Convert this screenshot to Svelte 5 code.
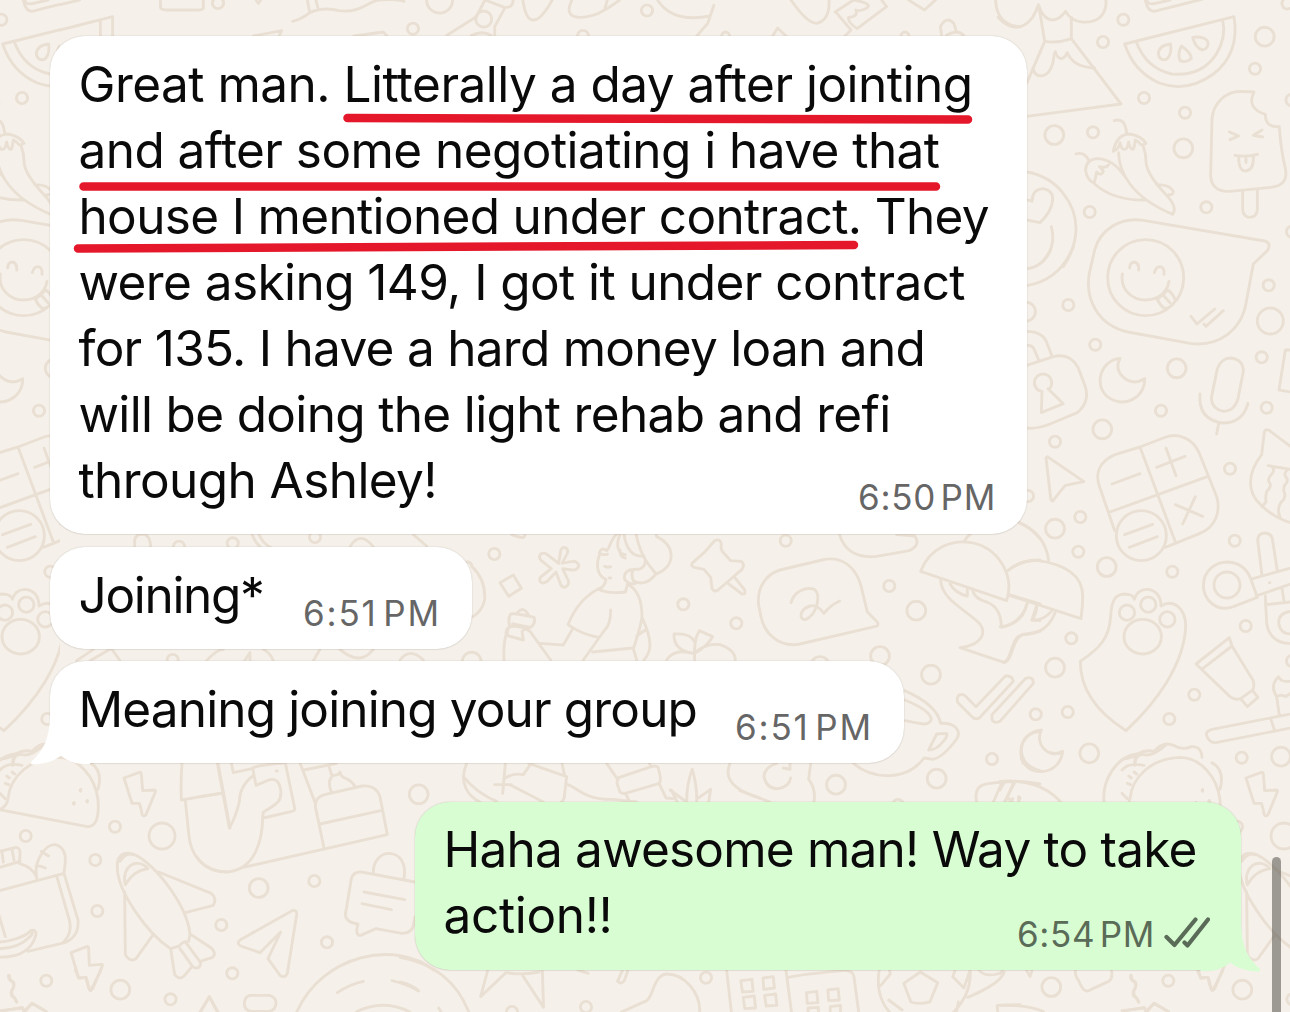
<script lang="ts">
	type Message = {
		id: string;
		lines: { text: string; width: number }[];
		time: string;
		mine?: boolean;
		tail?: boolean;
	};

	const messages: Message[] = [
		{
			id: 'contract',
			time: '6:50 PM',
			lines: [
				{ text: 'Great man. Litterally a day after jointing', width: 894 },
				{ text: 'and after some negotiating i have that', width: 861 },
				{ text: 'house I mentioned under contract. They', width: 910.5 },
				{ text: 'were asking 149, I got it under contract', width: 886.5 },
				{ text: 'for 135. I have a hard money loan and', width: 846.5 },
				{ text: 'will be doing the light rehab and refi', width: 812 },
				{ text: 'through Ashley!', width: 358.5 }
			]
		},
		{ id: 'joining', time: '6:51 PM', lines: [{ text: 'Joining*', width: 185 }] },
		{
			id: 'meaning',
			time: '6:51 PM',
			tail: true,
			lines: [{ text: 'Meaning joining your group', width: 618.5 }]
		},
		{
			id: 'reply',
			time: '6:54 PM',
			mine: true,
			tail: true,
			lines: [
				{ text: 'Haha awesome man! Way to take', width: 753 },
				{ text: 'action!!', width: 169 }
			]
		}
	];

	// spread the letters so that a line takes the width it was set to
	function fit(node: HTMLElement, width: number) {
		const natural = node.getBoundingClientRect().width;
		node.style.letterSpacing = (width - natural) / node.textContent!.length + 'px';
	}

	// wallpaper bubbles: x, y, radius
	const S = 5.6;
	const M = 9.4;
	const L = 13;
	const dots = [
		[1123.3, 19.7, S], [1103, 42, S], [1264.7, 36.7, M], [1255, 68.7, S], [1144, 98, S],
		[1185, 112.7, S], [1054.3, 135, M], [1093, 132.3, S], [1183.3, 148.3, M], [1089.7, 212, S],
		[1206.3, 207.3, S], [1291.5, 100, S], [1292, 231.7, S], [1287.5, 3.5, S], [1068.3, 305, S],
		[1026, 311.7, M], [1095.3, 344.7, S], [1176.7, 368.3, M], [1268.7, 285.3, S], [1270.3, 321, L],
		[1261.7, 357.3, S], [1161, 410.7, S], [1102.3, 429.3, M], [1055, 441.7, S], [1266.7, 407.7, S],
		[1230, 468.7, S], [1028, 496, S], [1080.3, 517, S], [1055, 528.7, M], [1078.3, 551.7, S],
		[1106.7, 567, M], [1172.3, 571.7, S], [1234.7, 540.7, S], [1071.3, 638.3, S], [1055, 667.7, M],
		[1245.7, 626, S], [1194.3, 694.7, S], [1169.3, 719, S], [1035.7, 714.3, S], [1067.7, 712, S],
		[1089.3, 753.3, M], [1241.7, 757.7, S], [1281, 756.7, M], [1292, 661, S], [1237, 826.7, S],
		[1284, 836, L], [1051.3, 987, M], [1168.3, 980.7, S], [1242.3, 989.7, M], [1292.5, 999.3, S],
		[25.7, 836, S], [95.3, 860, S], [97.3, 911, S], [258.7, 888, M], [314.3, 881, S],
		[221.3, 925, S], [232.3, 973.3, S], [327, 942.3, S], [418.7, 794.3, M], [494.3, 554, S],
		[683.3, 604.3, S], [736.3, 623.3, S], [471.7, 661.7, M], [785.7, 540.7, S], [889.3, 586, S],
		[916.3, 610.7, M], [880, 656, M], [931, 674.7, M], [820, 666, M], [992, 759, S],
		[836, 784.7, M], [936.7, 778.7, M], [898, 805, S], [179, 546.7, S], [232.7, 543.3, S],
		[315, 537, S], [172.7, 660, S], [218, 3, S], [413, 28.7, S], [483.7, 19, 8], [647, 10.5, S],
		[439.6, 0, L], [905, 36, 4], [725.6, 36, 4], [583, 36, S], [706, 977.7, S], [586, 1007, S],
		[512, 1012, S]
	];

	// wallpaper doodles, each block on its own 3x grid
	const doodles = [
		{
			at: 'translate(1000 0) scale(.33333)',
			paths: [
				// volcano
				'M-6 52Q50 112 98 52Q110 32 115 14Q122 36 134 49Q164 76 197 34Q212 62 246 66Q310 70 318 14V-9',
				'M117 20L134 124Q176 130 214 116V52M134 124L80 250M214 116L363 312L80 349',
				'M99 205C106 236 138 234 152 206C168 176 156 166 166 155C174 180 190 184 202 158C214 188 246 202 284 204',
				// book
				'M436 0Q442 34 462 34L606 -2M440 0Q444 16 466 10L510 0',
				// melon
				'M374 132L702 50Q720 160 640 222Q560 280 478 249Q402 216 374 132ZM408 124Q438 206 516 222Q604 230 648 164Q680 112 668 60',
				'M512 132Q476 136 475 162Q478 182 498 179Q516 168 512 132ZM544 138Q532 162 540 182Q558 190 574 176Q574 158 544 138ZM578 112Q586 144 608 150Q630 142 622 122Q608 108 578 112Z',
				// ice lolly
				'M762 276Q738 324 796 343Q796 384 838 380Q842 448 857 510C862 546 842 558 812 562L690 574C650 576 632 556 632 524L636 356C640 310 676 274 722 274Z',
				'M728 572V628Q730 652 750 652Q772 650 772 626V568M688 396L716 408L690 419M786 390L760 406L788 411M705 466Q740 472 772 463M716 470Q716 514 738 513Q762 510 760 470M738 476V488',
				// chillies
				'M343 362Q376 350 380 402M340 454Q350 402 390 402Q424 408 438 430Q422 440 418 428L406 420Q404 438 400 448Q390 450 386 426Q382 448 374 448Q364 450 360 428Q358 446 340 454Z',
				'M356 458Q356 506 390 552Q430 606 518 643Q534 620 496 582Q438 520 438 484Q438 460 430 440M228 462Q252 454 266 480M376 532Q340 476 290 476Q256 480 257 512Q260 538 282 550Q286 538 290 516Q304 530 310 514Q304 504 298 500Q318 506 326 494M284 552Q340 602 436 600M470 554Q510 554 520 574Q520 586 506 584',
				// heart eyes
				'M80 516C170 530 230 610 228 692C226 730 214 764 190 800M80 600Q90 600 96 604Q98 566 130 566Q160 572 158 598Q156 634 120 668L80 660M154 680Q170 740 128 785'
			]
		},
		{
			at: 'translate(1000 250) scale(.33333)',
			paths: [
				// speech bubble with face
				'M284 0L268 70C254 150 296 226 384 246L570 280C656 292 724 240 738 160L760 42L802 2Q816 -20 794 -27L430 -89C360 -100 300 -60 284 0',
				'M551 83A114 114 0 1 1 323 83A114 114 0 1 1 551 83ZM389 54Q390 36 404 36Q418 40 416 60M463 68Q468 50 480 50Q494 52 492 73M367 72C360 120 398 150 436 150C476 150 502 126 507 94M472 148L504 120Q520 132 526 152Q520 170 494 176Q480 166 472 148M490 136L510 158',
				// heart eyes, low side
				'M573 199L591 222L644 177M612 222L618 229L670 182M80 56Q124 54 152 0M80 107Q180 90 220 -10',
				// padlock
				'M80 244Q130 244 142 282L155 316M80 286Q98 284 104 302L116 330M80 346L160 320Q210 308 234 352L256 410Q270 456 232 488L150 522Q110 538 80 534',
				'M146 418A26 26 0 1 0 126 424L124 488L190 461L144 416',
				// moon
				'M360 325C304 330 280 400 320 438C366 478 436 446 434 386Q398 408 368 380Q344 356 360 325Z',
				// microphone
				'M652 356Q664 324 692 324Q730 328 730 364L714 446Q704 482 672 484Q636 478 634 444ZM600 432Q594 508 666 519Q728 520 744 460M656 520L650 552',
				'M872 300L856 300L837 420L872 426',
				// keypad
				'M420 591L345 614C300 634 282 668 300 714L344 842M420 591L490 564C536 544 580 568 598 610L650 740C662 780 650 830 600 850L496 892M420 591L526 876M330 786L622 680M336 702L420 671M498 594L528 677M470 652L555 619M526 764L608 799M586 740L548 822M374 854L458 823M388 892L472 860',
				'M499 857A75 75 0 1 1 349 857A75 75 0 1 1 499 857Z',
				// cursor
				'M142 620L252 695L196 706Q184 720 158 753Q152 750 152 744L138 624Z',
				// monster
				'M872 590L806 540Q796 536 793 546L785 614C738 674 744 730 782 764C808 792 850 812 872 818M804 647L872 658M818 652Q826 664 812 676Q800 690 810 700Q814 712 800 724Q796 740 798 756L786 770M862 660Q848 672 860 684Q866 694 854 706Q848 720 854 730Q858 744 842 758Q830 780 840 800'
			]
		},
		{
			at: 'translate(1000 500) scale(.33333)',
			paths: [
				// paw
				'M241 484C300 444 328 414 332 350C334 308 342 284 372 282Q400 282 403 298Q412 268 442 268Q482 272 483 318C520 296 558 324 557 380C552 494 470 606 378 692C296 640 240 570 241 484Z',
				'M404 338A23 23 0 1 1 358 338A23 23 0 1 1 404 338ZM468 314A23 23 0 1 1 422 314A23 23 0 1 1 468 314ZM525 358A23 23 0 1 1 479 358A23 23 0 1 1 525 358ZM484 410A56 52 0 1 1 372 410A56 52 0 1 1 484 410Z',
				// scissors
				'M772 292L700 320C650 338 610 300 610 256C612 208 648 186 684 186C716 188 740 204 752 236L772 292M720 255A39 39 0 1 1 642 255A39 39 0 1 1 720 255ZM758 236L872 204M768 288L872 252M786 226L773 120Q774 100 794 99Q814 100 817 116L832 212M796 288L800 370C804 404 830 432 872 430M796 314L872 306M846 264L852 304M872 334Q836 338 836 368Q840 402 872 402M808 248L810 248',
				// tube
				'M588 492L688 413L696 438L760 542Q764 560 758 570L722 596Q706 602 690 590ZM608 506L696 438M722 596L742 620L774 592L758 572',
				// toothbrush
				'M872 642L636 688Q616 694 620 706Q628 732 652 727L872 684M812 656L824 692M838 646L830 590Q808 556 836 530Q842 548 872 544M830 590Q846 582 856 590L872 580',
				// parasols
				'M22 213Q60 180 110 181Q250 200 248 290Q248 320 243 356L28 286M58 68Q136 102 146 182M80 314Q66 374 0 380M110 320Q110 340 96 360Q130 362 154 334M166 336Q150 380 116 394C86 410 64 396 50 414C34 430 30 490 10 486',
				// moon
				'M124 690C70 698 50 744 70 790M124 690C104 728 140 776 186 757',
				// lettuce
				'M366 778Q400 774 412 762Q438 748 462 754Q490 722 520 736Q546 752 574 740Q604 738 606 772'
			]
		},
		{
			at: 'translate(1000 750) scale(.33333)',
			paths: [
				// moon, low side
				'M64 20C74 80 178 84 188 4Q170 14 152 8',
				'M312 154C306 90 350 20 410 12Q404 24 404 42',
				'M0 94Q120 84 186 160M0 120L12 98M14 154L46 94M28 156L38 146M56 156L60 142',
				'M226 660Q224 676 236 692Q250 728 266 722L326 694Q340 684 334 660M392 676Q390 690 404 696Q412 708 400 724Q396 738 410 744L416 756M0 766Q80 764 130 784M368 784L432 772L438 784L462 760L504 784M0 670L6 664M80 662L90 680L96 662M592 660L602 684L624 682Q628 708 638 722L668 662'
			]
		},
		{
			at: 'translate(460 520) scale(.33333)',
			paths: [
				'M20 126Q34 124 36 140Q78 180 74 240Q66 274 38 290M155 44Q180 54 192 52L196 42M120 188L160 165L184 205L146 229Z',
				// flower
				'M296 130L302 92Q308 78 318 84Q326 90 322 100L306 130Q330 124 344 124Q358 130 356 140Q350 152 336 150L308 146L326 184Q326 198 314 202Q302 200 300 188L288 156L262 184Q246 194 240 184Q236 174 246 168L274 146L244 122Q234 110 242 102Q252 96 262 104Z',
				// girl
				'M472 40C450 60 452 80 440 92Q424 80 418 98Q426 106 442 103M418 106C406 140 414 168 438 178Q436 198 416 208Q440 222 496 216L502 196M434 139Q442 144 452 140M448 174L452 174M480 44C464 80 478 102 496 104M492 42C498 90 520 112 552 108C562 130 550 146 534 148Q488 146 494 178Q508 196 526 190M480 90Q480 112 496 114M528 42Q540 100 566 134L588 162C560 198 530 190 520 182Q512 164 520 148M588 42L590 50C650 80 646 140 588 162',
				'M416 206C370 230 342 268 324 314Q366 344 416 352M452 270Q452 314 434 330L370 420M502 192Q546 214 546 290C540 330 530 356 520 386L530 420M398 396L518 384M546 292C580 366 574 394 552 420M530 348L556 330M338 326L310 375L240 370M132 420Q130 370 138 346Q138 324 150 320M150 320Q142 298 152 282Q166 278 222 292Q228 310 212 322L158 312M172 278Q190 256 206 286M140 346L190 360L186 334Q196 322 210 334L272 420M142 344Q140 318 160 318L206 324',
				// pin
				'M696 130L732 98L764 62Q782 54 784 74Q780 88 792 100L812 122L844 124Q856 134 846 148L774 210Q762 218 756 206L752 172L732 148L702 142Q692 138 696 130ZM804 190L846 222Q858 224 854 210L824 172',
				// fruit
				'M700 400Q640 392 642 342Q692 338 704 366M704 420Q700 360 718 332L758 350Q740 380 704 400M620 420Q642 384 700 400Q740 368 780 374Q826 390 826 420',
				// picnic
				'M20 730C-6 790 26 830 60 846M10 770Q50 820 110 844M136 730L128 820M104 794H154M132 776Q160 758 190 764L208 738M206 730L320 770L314 820Q314 840 304 846M150 794L250 846M306 730L314 768M322 794C350 800 370 840 460 838L530 846M440 730L474 780M474 780Q466 782 480 816Q488 822 496 820L598 790Q606 780 594 742Q588 736 574 740L474 774M496 820L510 846M598 792L618 834L640 836M568 730L574 740M630 810L680 846M680 846Q680 790 697 748Q712 800 710 846M634 810L652 846M752 808L712 836M752 808L746 846M810 730C784 790 850 820 900 834'
			]
		},
		{
			at: 'translate(740 520) scale(.33333)',
			paths: [
				// note bubble
				'M120 150L246 120C304 106 346 140 362 194L382 276L412 306Q418 318 404 320L180 372C116 384 72 340 62 286L56 256C50 204 76 164 120 150Z',
				'M153 248C162 214 196 200 224 208C244 226 230 286 196 299C176 300 178 268 210 258Q230 252 252 280Q270 256 299 243',
				'M298 42C312 90 350 116 410 109L508 92Q544 74 524 48L470 44',
				// parasols
				'M542 154C570 80 640 58 694 68C770 82 826 160 800 242ZM674 62Q680 50 692 42M836 8Q870 20 900 56M806 150Q840 122 900 120M808 224L900 252',
				'M602 180C604 240 680 270 720 312C740 340 724 376 660 383L794 428C820 420 816 340 860 342L900 334M630 192Q646 220 682 228V206M698 212Q704 236 740 246Q784 262 784 322C820 316 850 290 862 250M890 256L876 300L900 302',
				// ticks
				'M656 526Q668 520 676 528L708 560L796 468Q818 466 820 484L720 592Q708 602 696 590L654 548Q648 536 656 526ZM756 584L856 476Q880 466 880 490L782 602Q762 614 756 598Z',
				// mug
				'M494 512Q590 554 602 610C650 608 666 636 648 660Q608 712 580 718L552 714C500 784 400 780 340 730M494 540Q570 570 574 598Q568 614 550 612Q520 608 496 602M590 642L620 640Q624 650 608 666Q590 690 566 690Z',
				// refresh tag
				'M110 730Q74 740 72 770Q80 808 114 806Q148 800 152 774M130 744L150 748V732M212 730L206 778Q228 806 222 846M0 812L90 846',
				'M900 634Q844 640 844 694Q850 740 900 752',
				'M710 846Q698 794 750 790Q830 778 900 792M760 846L784 792M796 846L820 790M808 836L818 846M836 830V846'
			]
		},
		{
			at: 'translate(0 740) scale(.33333)',
			paths: [
				// taco
				'M-100 190L262 260Q300 262 294 180C286 110 236 54 176 52C90 54 30 110 24 176Q20 200 0 208',
				'M38 76Q40 40 66 44Q94 50 132 14M270 68Q310 90 294 148M0 90Q20 66 66 76M0 160L16 176M20 108L28 114M16 130L26 134M36 96L44 102',
				'M242 151H240M222 190H220M262 184H260',
				'M242 148V154M222 187V193M262 181V187',
				// bolts
				'M372 114L418 97Q424 96 424 102L428 152L462 150Q468 150 466 156L438 224Q430 232 426 222Q424 206 418 190L396 190Z',
				'M213 638L260 620Q266 618 266 626L268 676L302 673Q310 672 306 680L278 746Q270 756 266 744Q264 726 258 712L236 714Z',
				// shopping bag
				'M-10 454L192 400L234 540Q238 590 194 608L84 634M170 408L208 540Q218 580 190 606M110 414C100 364 136 312 166 314C206 324 196 370 192 398M146 348Q132 340 124 334M136 384Q120 376 108 378M110 412Q98 382 58 370L60 346Q62 322 48 322L0 334M60 364L0 382M36 328L42 360M6 336L10 366M-20 470L16 590',
				'M-60 600C0 620 80 590 92 572Q108 566 108 584C94 640 40 660 -40 648M92 572Q102 580 90 590Q50 630 -20 626',
				// plane
				'M512 626C440 580 350 450 352 380Q350 338 390 340C450 350 560 490 570 582L566 604Q546 604 538 618ZM376 434C362 382 410 348 444 386Q400 392 376 434ZM360 364Q378 336 398 344M476 396L634 460Q652 476 640 496L556 518M374 456L376 644Q390 668 408 656L458 586M512 626L524 704Q538 722 552 708L574 682M570 582L634 624Q650 640 638 652L600 664M540 626L578 680Q600 692 602 668L558 608',
				// steam and box
				'M28 706Q26 718 40 726Q46 738 36 750Q32 764 44 774L50 786M0 812L68 804L72 816M74 816L96 790L140 816M602 816L628 770L654 816',
				// trousers
				'M546 69Q542 120 544 180L660 160M556 182L566 280C572 350 610 392 680 396M654 69L690 264'
			]
		},
		{
			at: 'translate(200 740) scale(.33333)',
			paths: [
				'M52 69L88 264Q106 234 118 186C118 140 150 112 162 106M0 170L66 160M-10 350Q20 396 80 396C170 390 188 290 188 230L190 216C236 190 246 180 242 150Q236 110 206 120L168 136L158 84Q170 76 250 69M256 69L284 204Q286 212 276 214L190 234M94 69L100 98L156 86M232 93H229',
				// cake
				'M372 324L346 200Q346 170 374 164L486 138Q528 134 540 170L562 284L130 382M360 252L542 212M346 190L300 69M312 90L410 70M394 156Q380 120 400 106Q416 106 420 96Q422 112 440 116Q458 126 464 138M386 76L396 108',
				// paper plane
				'M276 512Q292 508 290 524L262 700Q254 716 240 706L204 656L242 576L180 638L122 618Q108 610 120 600Z',
				// chat lock
				'M645 426L484 396Q460 394 454 416L436 524Q438 548 474 552Q464 588 482 586L528 566L606 580Q640 580 642 546L645 530M520 396C520 360 544 340 568 340C600 342 620 370 612 414M492 456L614 479M486 491L574 509',
				'M133 790Q134 766 154 766H208Q228 770 228 790Q226 812 206 814H154Q134 812 133 790ZM0 816L28 770L52 816',
				// lid
				'M290 816C370 640 590 600 700 690M412 758Q450 732 490 724M576 722Q620 732 656 753M468 816Q550 776 630 816'
			]
		},
		{
			at: 'translate(400 920) scale(.39541 .33333)',
			paths: [
				'M0 112C80 128 142 180 174 276M0 186Q30 194 46 212M98 264L104 276M222 150L204 230L268 158Q310 166 352 156M310 166L363 262L360 150M450 150L476 160M562 152L550 184Q560 196 568 180L576 152M560 276L624 242C642 226 640 170 672 162C720 160 760 220 758 276M826 150L838 276M976 150L990 276M980 174Q990 166 1120 152Q1146 150 1148 170L1160 276',
				'M862 182L890 178L893 214L866 216ZM918 174L944 170L947 204L920 208ZM868 232L896 228L899 264L872 266ZM922 226L950 222L953 256L926 258ZM1028 218L1054 214L1057 248L1030 250ZM1082 210L1108 206L1111 240L1084 242ZM1032 276V264L1058 262V276M1088 276V260L1114 256V276',
				'M1212 150C1206 190 1210 240 1238 276M1238 150L1240 162L1216 196M1316 156L1360 188L1340 246Q1312 254 1292 246L1274 190ZM1404 150L1398 170L1426 204L1442 150Q1446 220 1400 276M1236 240L1270 270M1412 246L1408 274M1464 150Q1480 176 1528 156Q1520 190 1436 232M1568 254L1510 256L1512 276'
			]
		},
		{
			at: 'translate(60 0) scale(.61224 .33333)',
			paths: [
				'M0 14L32 0M164 0V20Q164 30 176 30H224Q236 30 234 20V0M0 90L86 50V108M66 60V108M320 0L324 10L328 0M404 0L408 38M418 0L422 30M380 64Q396 56 408 38Q430 20 456 32C490 40 500 8 520 0Q550 -4 562 4M316 108L362 92L358 108M480 108L528 96L534 108M632 106L680 50L694 0M694 0L726 22Q740 24 740 0M726 26L710 80V108M756 0C762 80 780 80 804 0M836 0C820 60 850 60 880 40Q900 20 914 0M890 26L894 0M976 0Q1000 70 1062 48M1068 16L1058 70L1040 108M1194 0Q1220 70 1236 70Q1258 60 1256 0M1266 36L1296 0M1296 0Q1328 10 1318 24Q1304 36 1300 30Q1304 50 1288 52Q1286 66 1302 86L1350 20L1342 0M1268 38L1292 90L1282 108M1386 0L1412 30L1430 0M1440 106L1438 80Q1448 46 1460 70L1464 94M1448 106Q1466 86 1476 106M1164 108L1172 84L1186 108M672 106Q690 90 704 106M1528 0Q1530 76 1568 80'
			]
		},
		{
			// thin strips between the first bubbles
			at: 'translate(0 480) scale(.33333)',
			paths: [
				'M404 200V180Q408 162 428 162Q450 164 452 200M756 162Q764 186 780 200M776 162Q788 190 812 202M620 542Q650 508 670 508M750 518V542M734 542L750 518M790 508Q812 520 820 542M336 508L360 542M230 542L280 508M270 542L330 508M960 508L940 542M1020 508Q1080 560 1120 508M1200 540Q1230 500 1270 540M1050 200Q1080 150 1120 200M1240 164L1280 198'
			]
		}
	];
</script>

<main class="chat">
	<svg class="wallpaper" viewBox="0 0 1290 1012" aria-hidden="true">
		<defs>
			<g id="tile">
				{#each dots as [x, y, r]}
					<circle cx={x} cy={y} {r} />
				{/each}
				{#each doodles as block}
					<g transform={block.at}>
						{#each block.paths as d}
							<path {d} />
						{/each}
					</g>
				{/each}
			</g>
			<clipPath id="seam"><path d="M0 0H60V770H178V1012H0Z" /></clipPath>
			<clipPath id="seamRight"><path d="M1100 735H1290V1012H1100Z" /></clipPath>
		</defs>
		<use href="#tile" />
		<g clip-path="url(#seam)"><use href="#tile" x="-1122" /></g>
		<g clip-path="url(#seamRight)"><use href="#tile" x="1122" /></g>
	</svg>

	<section class="thread">
		{#each messages as message (message.id)}
			<article class="bubble {message.id}" class:mine={message.mine}>
				{#if message.tail}
					<svg class="tail" viewBox="0 0 60 60" aria-hidden="true">
						<path
							d="M20 8C20 34 14 46 2 57C0 59 1 60.5 3 60.5C14 60.5 24 57 31 51.5C37 57 45 60 54 60L60 60V8Z"
						/>
					</svg>
				{/if}
				<p>
					{#each message.lines as line}
						<span use:fit={line.width}>{line.text}</span>
					{/each}
				</p>
				<footer>
					<time use:fit={138}>{message.time}</time>
					{#if message.mine}
						<svg class="ticks" viewBox="0 0 46 31" aria-hidden="true">
							<path d="M2.5 20L10.5 28L31.5 2.5M20.5 25.5L23.5 28.5L44 2.5" />
						</svg>
					{/if}
				</footer>
				{#if message.id === 'contract'}
					<svg class="marks" viewBox="0 0 977 497" aria-hidden="true">
						<path d="M297.5 82L918 83.5M33.5 150.5H886M28 212.5L804 209" />
					</svg>
				{/if}
			</article>
		{/each}
	</section>

	<div class="scrollbar"></div>
</main>

<style>
:global(body) {
	margin: 0;
	background: #f5f1ea;
}
.chat {
	display: grid;
	grid-template: 1012px / 1290px;
	overflow: hidden;
	font-family: Inter, 'Liberation Sans', sans-serif;
	color: #0a0a0a;
}
.chat > * {
	grid-area: 1 / 1;
}
.wallpaper {
	width: 1290px;
	height: 1012px;
	fill: none;
	stroke: #eadfd3;
	stroke-width: 2.9;
	stroke-linecap: round;
	stroke-linejoin: round;
}
.wallpaper path {
	vector-effect: non-scaling-stroke;
}
.thread {
	display: flex;
	flex-direction: column;
	align-items: flex-start;
	padding: 36px 49px 0 50px;
	z-index: 1;
}
.bubble {
	position: relative;
	isolation: isolate;
	display: grid;
	box-sizing: border-box;
	padding: 14.6px 31px 15.5px 28.5px;
	border-radius: 35px;
	background: #fff;
	box-shadow: 0 0 1.5px rgba(60, 50, 30, .25), 0 1px 1px rgba(60, 50, 30, .06);
}
.bubble > p,
.bubble > footer {
	grid-area: 1 / 1;
}
.contract {
	width: 977px;
	height: 497.5px;
	margin-bottom: 13.5px;
}
.joining {
	width: 422px;
	height: 102px;
	margin-bottom: 12px;
}
.meaning {
	width: 854px;
	height: 102px;
	margin-bottom: 38.6px;
}
.mine {
	align-self: flex-end;
	width: 826px;
	height: 168.5px;
	background: #d8fdd2;
}
p {
	height: 0;
	margin: 0;
	font-size: 49.5px;
	line-height: 66px;
}
p span {
	display: block;
	width: max-content;
	white-space: pre;
}
footer {
	display: flex;
	align-items: center;
	gap: 9px;
	align-self: end;
	justify-self: end;
	font-size: 35px;
	line-height: 42px;
	color: #666;
}
time {
	white-space: pre;
	word-spacing: -6px;
}
.mine footer {
	color: #5a6b58;
}
.ticks {
	width: 46px;
	height: 31px;
	margin-top: -3px;
	fill: none;
	stroke: currentColor;
	stroke-width: 4.2;
	stroke-linecap: round;
	stroke-linejoin: round;
}
.tail {
	position: absolute;
	left: -20px;
	bottom: -.5px;
	z-index: -1;
	width: 60px;
	height: 60px;
	overflow: visible;
	fill: #fff;
}
.mine .tail {
	left: auto;
	right: -20px;
	transform: scaleX(-1);
	fill: #d8fdd2;
}
.marks {
	position: absolute;
	inset: 0;
	width: 977px;
	height: 497px;
	fill: none;
	stroke: #e5182b;
	stroke-width: 8.5;
	stroke-linecap: round;
}
.scrollbar {
	align-self: end;
	justify-self: end;
	width: 9px;
	height: 165px;
	margin: 0 9px -10px 0;
	border-radius: 5px;
	background: rgba(75, 72, 68, .52);
	z-index: 2;
}
</style>
